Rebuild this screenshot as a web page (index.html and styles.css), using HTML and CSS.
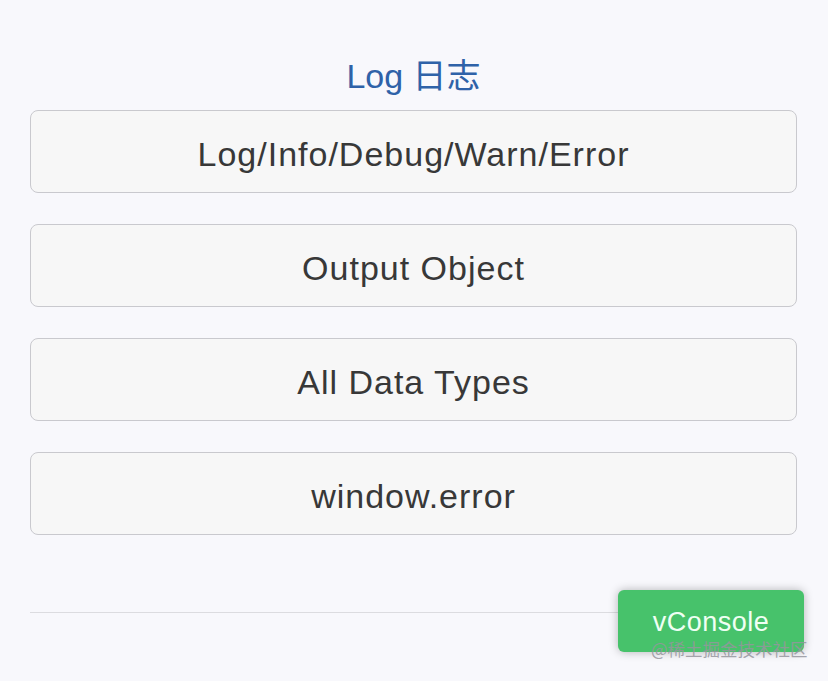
FILE: index.html
```html
<!DOCTYPE html>
<html lang="zh-CN">
<head>
<meta charset="utf-8">
<title>Log 日志</title>
<link rel="stylesheet" href="styles.css">
</head>
<body>
<main class="page">
  <h1 class="title">Log 日志</h1>
  <div class="btn-list">
    <button class="btn">Log/Info/Debug/Warn/Error</button>
    <button class="btn">Output Object</button>
    <button class="btn">All Data Types</button>
    <button class="btn">window.error</button>
  </div>
  <hr class="divider">
</main>
<div class="vconsole">vConsole</div>
<div class="watermark">@稀土掘金技术社区</div>
</body>
</html>
```
FILE: styles.css
```css
html, body {
  margin: 0;
  padding: 0;
}
body {
  background: #f8f8fc;
  font-family: "Liberation Sans", Arial, "Noto Sans CJK SC", sans-serif;
  width: 828px;
  height: 681px;
  overflow: hidden;
  position: relative;
}
.page {
  padding: 56px 31px 0 30px;
}
.title {
  margin: 0 0 14px;
  font-size: 34px;
  line-height: 40px;
  font-weight: normal;
  color: #2f62a8;
  text-align: center;
  font-family: "Liberation Sans", "Noto Sans CJK SC", sans-serif;
}
.btn-list {
  display: flex;
  flex-direction: column;
  gap: 31px;
}
.btn {
  height: 83px;
  box-sizing: border-box;
  border: 1px solid #c9c9ce;
  border-radius: 8px;
  background: #f7f7f7;
  color: #383838;
  font-family: "Liberation Sans", Arial, sans-serif;
  font-size: 34px;
  letter-spacing: 1px;
  padding: 5px 0 0;
  margin: 0;
  text-align: center;
}
.divider {
  margin: 77px 0 0;
  border: 0;
  height: 1px;
  background: #dcdce0;
}
.vconsole {
  position: absolute;
  left: 618px;
  top: 590px;
  width: 186px;
  height: 62px;
  box-sizing: border-box;
  border-radius: 6px;
  background: #47c26b;
  color: #effff3;
  font-size: 27px;
  letter-spacing: 0.5px;
  display: flex;
  align-items: center;
  justify-content: center;
  padding-top: 3px;
  box-shadow: 0 0 10px rgba(0, 0, 0, 0.28);
}
.watermark {
  position: absolute;
  left: 651px;
  top: 638px;
  font-family: "Noto Sans CJK SC", sans-serif;
  font-size: 17.5px;
  line-height: 22px;
  color: rgba(150, 150, 158, 0.85);
  white-space: nowrap;
}
```
